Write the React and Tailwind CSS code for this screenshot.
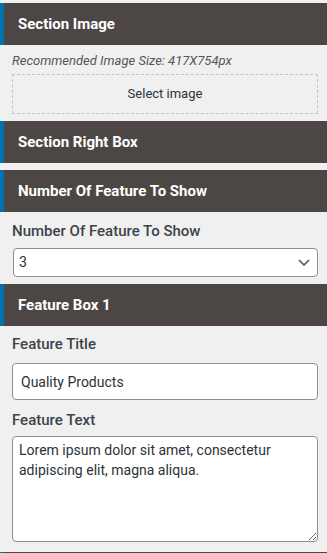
const SectionHeader = ({ title }) => (
    <div className="flex h-[42px] items-center border-l-4 border-[#0073aa] bg-[#4c4745] pl-[14px] text-[15px] font-bold text-white">
        {title}
    </div>
);

const Label = ({ children, className = '' }) => (
    <div className={`h-5 text-[15px] leading-5 font-medium text-[#3c434a] ${className}`}>{children}</div>
);

export default function App() {
    return (
        <div className="h-[553px] overflow-hidden bg-[#f0f0f0] pt-[3px]" style={{ fontFamily: 'Roboto, "Liberation Sans", sans-serif' }}>
            <SectionHeader title="Section Image" />
            <div className="pl-3 pr-[9px] pt-[6px] pb-[7px]">
                <div className="h-[20px] text-[13px] leading-5 italic text-[#50575e]">Recommended Image Size: 417X754px</div>
                <div className="mt-[3px] flex h-[40px] items-center justify-center border border-dashed border-[#c3c4c7] text-[13px] text-[#2c3338]">
                    Select image
                </div>
            </div>
            <SectionHeader title="Section Right Box" />
            <div className="h-[7px]" />
            <SectionHeader title="Number Of Feature To Show" />
            <div className="pl-3 pr-[9px] pt-[9px] pb-[7px]">
                <Label>Number Of Feature To Show</Label>
                <div className="relative mt-[7px] ml-px">
                    <select
                        defaultValue="3"
                        className="h-[29px] w-full appearance-none rounded-[4px] border border-[#8c8f94] bg-white pl-[5px] text-[14px] text-[#2c3338] outline-none"
                    >
                        <option>1</option>
                        <option>2</option>
                        <option>3</option>
                        <option>4</option>
                    </select>
                    <svg className="pointer-events-none absolute right-[8px] top-[11px] h-[7px] w-[12px] text-[#50575e]" viewBox="0 0 12 7" fill="none" stroke="currentColor" strokeWidth="1.6">
                        <path d="M1 1l5 5 5-5" />
                    </svg>
                </div>
            </div>
            <SectionHeader title="Feature Box 1" />
            <div className="pl-3 pr-[9px] pt-[8px]">
                <Label>Feature Title</Label>
                <input
                    defaultValue="Quality Products"
                    className="mt-[9px] block h-[37px] w-full rounded-[4px] border border-[#8c8f94] bg-white px-[8px] text-[14px] text-[#2c3338] outline-none"
                />
                <Label className="mt-[10px]">Feature Text</Label>
                <textarea
                    defaultValue="Lorem ipsum dolor sit amet, consectetur adipiscing elit, magna aliqua."
                    className="mt-[6px] block h-[106px] w-full rounded-[4px] border border-[#8c8f94] bg-white px-[6px] pt-[3px] text-[14px] leading-5 text-[#2c3338] outline-none"
                />
            </div>
            <div className="mt-[10px] h-[42px] border-l-4 border-[#0073aa] bg-[#4c4745]" />
        </div>
    );
}
